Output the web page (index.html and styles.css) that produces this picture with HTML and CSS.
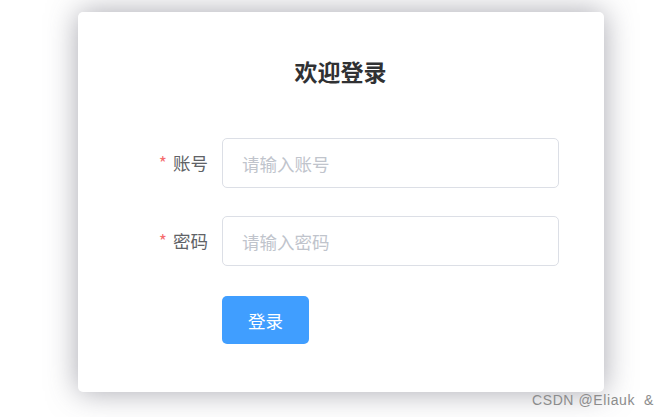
FILE: index.html
```html
<!DOCTYPE html>
<html lang="zh">
<head>
<meta charset="utf-8">
<link rel="stylesheet" href="styles.css">
</head>
<body>
<div class="page">
  <div class="card">
    <h2 class="title">欢迎登录</h2>
    <form class="form">
      <div class="item">
        <label class="label"><span class="star">*</span>账号</label>
        <input class="input" type="text" placeholder="请输入账号">
      </div>
      <div class="item">
        <label class="label"><span class="star">*</span>密码</label>
        <input class="input" type="password" placeholder="请输入密码">
      </div>
      <div class="item item-btn">
        <span class="label"></span>
        <button class="btn" type="button">登录</button>
      </div>
    </form>
  </div>
</div>
<div class="watermark">CSDN @Eliauk&nbsp; &amp;</div>
</body>
</html>
```
FILE: styles.css
```css
html, body {
  margin: 0;
  padding: 0;
  background: #fff;
  font-family: "Noto Sans CJK SC", "Noto Sans", sans-serif;
  width: 668px;
  height: 417px;
  overflow: hidden;
}
.page {
  padding: 12px 0 0 78px;
}
.card {
  width: 526px;
  height: 380px;
  box-sizing: border-box;
  background: #fff;
  border-radius: 5px;
  box-shadow: 0 0 30px rgba(80, 80, 95, 0.5);
  padding: 43px 45px 0 44px;
}
.title {
  margin: 0 0 50px;
  text-align: center;
  font-size: 23px;
  line-height: 33px;
  font-weight: 700;
  color: #303133;
}
.form {
  margin: 0;
}
.item {
  display: flex;
  align-items: center;
  margin-bottom: 28px;
}
.item-btn {
  margin-top: 2px;
}
.label {
  width: 100px;
  flex: none;
  box-sizing: border-box;
  padding-right: 14px;
  text-align: right;
  font-size: 17.5px;
  color: #606266;
  line-height: 50px;
}
.star {
  color: #f56c6c;
  margin-right: 6px;
}
.input {
  flex: 1;
  height: 50px;
  box-sizing: border-box;
  border: 1px solid #dcdfe6;
  border-radius: 5px;
  padding: 0 19px;
  font-size: 17.5px;
  font-family: "Noto Sans CJK SC", "Noto Sans", sans-serif;
  color: #606266;
  outline: none;
  background: #fff;
}
.input::placeholder {
  color: #c0c4cc;
}
.btn {
  width: 87px;
  height: 48px;
  margin-top: 2px;
  border: none;
  border-radius: 5px;
  background: #409eff;
  color: #fff;
  font-size: 17.5px;
  font-family: "Noto Sans CJK SC", "Noto Sans", sans-serif;
  padding: 0;
}
.watermark {
  position: absolute;
  left: 532px;
  top: 392px;
  font-family: "Liberation Sans", Arial, sans-serif;
  font-size: 14px;
  color: #8c8c8c;
  letter-spacing: 0.6px;
}
```
